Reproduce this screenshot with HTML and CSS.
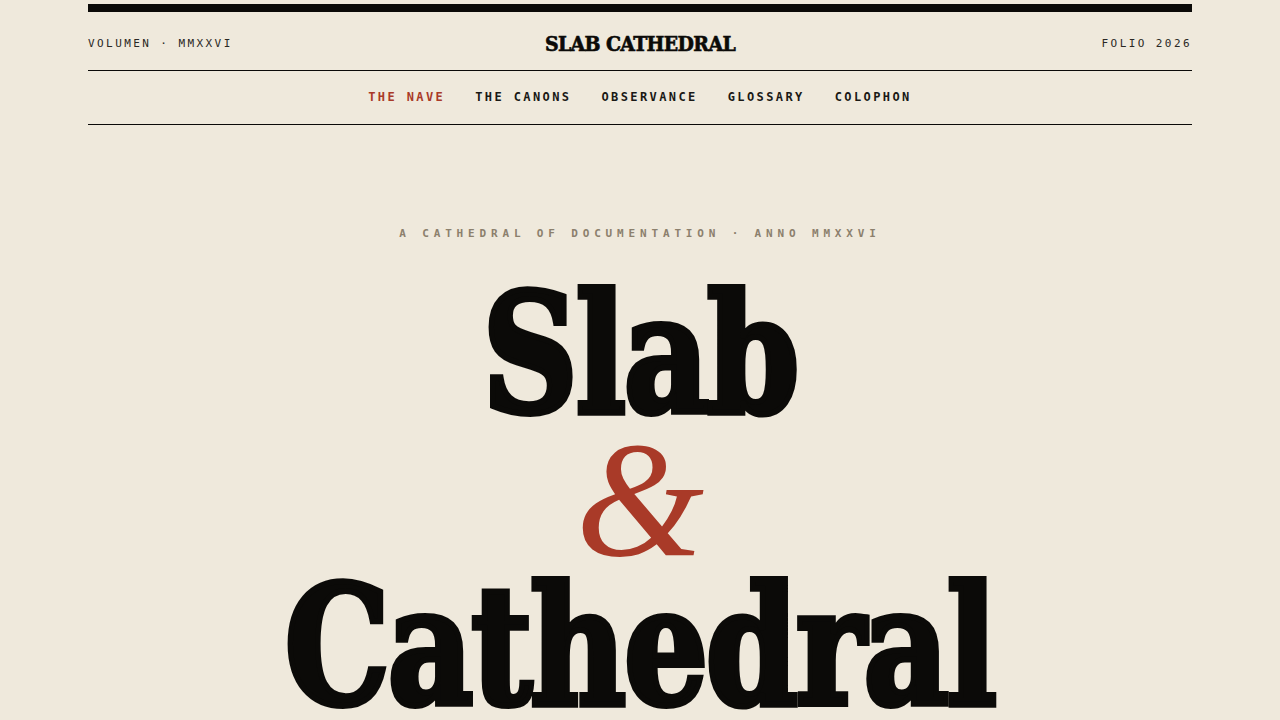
FILE: index.html
```html
<!DOCTYPE html>
<html lang="en">
<head>
<meta charset="utf-8">
<title>Slab Cathedral</title>
<link rel="stylesheet" href="styles.css">
</head>
<body>
<div class="page">
  <header class="masthead">
    <div class="meta">VOLUMEN · MMXXVI</div>
    <div class="brand">SLAB CATHEDRAL</div>
    <div class="meta right">FOLIO 2026</div>
  </header>
  <nav class="nav">
    <a class="active" href="#">THE NAVE</a>
    <a href="#">THE CANONS</a>
    <a href="#">OBSERVANCE</a>
    <a href="#">GLOSSARY</a>
    <a href="#">COLOPHON</a>
  </nav>
  <section class="hero">
    <p class="kicker">A CATHEDRAL OF DOCUMENTATION · ANNO MMXXVI</p>
    <h1 class="title">
      <span class="line">Slab</span>
      <span class="amp">&amp;</span>
      <span class="line">Cathedral</span>
    </h1>
  </section>
</div>
</body>
</html>
```

FILE: styles.css
```css
* { box-sizing: border-box; }
html, body { margin: 0; padding: 0; }
body {
  background: #efe9dc;
  color: #0b0a08;
  font-family: "DejaVu Sans Mono", monospace;
  overflow: hidden;
}
.page {
  width: 1104px;
  margin: 0 auto;
  padding-top: 4px;
}
.masthead {
  border-top: 8px solid #0b0a08;
  border-bottom: 1px solid #0b0a08;
  height: 67px;
  padding-top: 4px;
  display: grid;
  grid-template-columns: 1fr auto 1fr;
  align-items: center;
}
.meta {
  font-size: 11px;
  letter-spacing: 0.22em;
  color: #2a2824;
}
.meta.right { text-align: right; }
.brand {
  font-family: "DejaVu Serif Condensed", "DejaVu Serif", serif;
  font-weight: 700;
  font-size: 21px;
  letter-spacing: -0.03em;
  -webkit-text-stroke: 0.6px #0b0a08;
}
.nav {
  border-bottom: 1px solid #0b0a08;
  height: 54px;
  padding-bottom: 2px;
  display: flex;
  justify-content: center;
  align-items: center;
  gap: 30px;
}
.nav a {
  font-size: 12px;
  letter-spacing: 0.2em;
  color: #1a1916;
  text-decoration: none;
  font-weight: 700;
}
.nav a.active { color: #a93a28; }
.hero {
  text-align: center;
  padding-top: 102px;
}
.kicker {
  margin: 0;
  font-size: 11px;
  letter-spacing: 0.44em;
  color: #8c806d;
  font-weight: 700;
}
.title {
  margin: 41px 0 0;
  font-family: "DejaVu Serif Condensed", "DejaVu Serif", serif;
  font-weight: 700;
  font-size: 165px;
  line-height: 146px;
  display: flex;
  flex-direction: column;
  align-items: center;
}
.line {
  letter-spacing: -0.015em;
  -webkit-text-stroke: 6px #0b0a08;
  transform: scaleX(0.89);
}
.amp {
  font-family: "Liberation Serif", serif;
  font-style: italic;
  font-weight: 400;
  color: #a93a28;
  font-size: 165px;
  letter-spacing: 0;
}
```
